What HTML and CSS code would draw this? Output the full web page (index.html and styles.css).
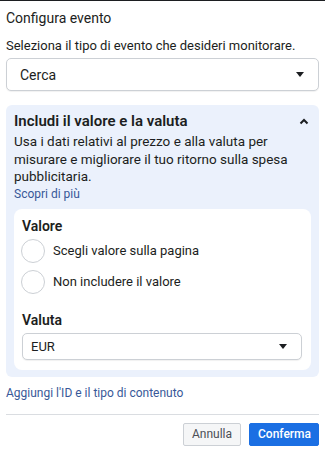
FILE: index.html
```html
<!DOCTYPE html>
<html lang="it">
<head>
<meta charset="utf-8">
<title>Configura evento</title>
<link rel="stylesheet" href="styles.css">
</head>
<body>
<div class="dialog">
  <h1 class="title">Configura evento</h1>
  <p class="subtitle">Seleziona il tipo di evento che desideri monitorare.</p>
  <div class="select select-main">
    <span>Cerca</span>
    <span class="caret"></span>
  </div>

  <section class="panel">
    <div class="panel-head">
      <h2>Includi il valore e la valuta</h2>
      <svg class="chev" width="10" height="7" viewBox="0 0 10 7"><path d="M1.5 5.5 L5 2 L8.5 5.5" fill="none" stroke="#1c1e21" stroke-width="2"/></svg>
    </div>
    <p class="desc">Usa i dati relativi al prezzo e alla valuta per misurare e migliorare il tuo ritorno sulla spesa pubblicitaria.</p>
    <a class="link small" href="#">Scopri di più</a>

    <div class="card">
      <h3>Valore</h3>
      <label class="radio"><span class="circle"></span><span>Scegli valore sulla pagina</span></label>
      <label class="radio"><span class="circle"></span><span>Non includere il valore</span></label>
      <h3 class="valuta">Valuta</h3>
      <div class="select select-eur">
        <span>EUR</span>
        <span class="caret"></span>
      </div>
    </div>
  </section>

  <a class="link extra" href="#">Aggiungi l'ID e il tipo di contenuto</a>
  <hr class="sep">
  <div class="actions">
    <button class="btn cancel">Annulla</button>
    <button class="btn confirm">Conferma</button>
  </div>
</div>
</body>
</html>
```

FILE: styles.css
```css
html, body {
  margin: 0;
  padding: 0;
  background: #ffffff;
}
body {
  font-family: Roboto, "Liberation Sans", Arial, sans-serif;
  color: #1c1e21;
}
.dialog {
  width: 313px;
  padding: 0 6px;
  border-top: 1px solid #1c1e21;
}
.title {
  margin: 8px 0 0;
  font-size: 14px;
  line-height: 18px;
  font-weight: 400;
}
.subtitle {
  margin: 10px 0 0;
  font-size: 13px;
  line-height: 17px;
}
.select {
  display: flex;
  align-items: center;
  justify-content: space-between;
  box-sizing: border-box;
  border: 1px solid #ccd0d5;
  border-radius: 5px;
  background: #fff;
  box-shadow: 0 1px 1px rgba(0,0,0,0.06);
}
.select-main {
  margin-top: 4px;
  height: 33px;
  padding: 0 14px 0 13px;
  font-size: 14px;
}
.caret {
  width: 0;
  height: 0;
  border-left: 4.5px solid transparent;
  border-right: 4.5px solid transparent;
  border-top: 5px solid #1c1e21;
}
.panel {
  margin-top: 14px;
  background: #ebf1fc;
  border-radius: 6px;
  padding: 7px 8px 7px 8px;
}
.panel-head {
  display: flex;
  align-items: center;
  justify-content: space-between;
  padding-right: 2px;
}
.panel-head h2 {
  margin: 0;
  font-size: 15px;
  line-height: 18px;
  font-weight: 600;
}
.desc {
  margin: 3px 0 0;
  font-size: 13.5px;
  line-height: 17.5px;
}
.link {
  color: #385898;
  text-decoration: none;
  display: block;
}
.small {
  font-size: 12px;
  line-height: 16px;
}
.card {
  margin-top: 7px;
  background: #fff;
  border-radius: 8px;
  padding: 8px 9px 10px 8px;
}
.card h3 {
  margin: 0;
  font-size: 14px;
  line-height: 18px;
  font-weight: 600;
}
.radio {
  display: flex;
  align-items: center;
  gap: 8px;
  font-size: 13px;
  height: 24px;
  margin-top: 4px;
}
.radio + .radio {
  margin-top: 7px;
}
.circle {
  box-sizing: border-box;
  width: 24px;
  height: 24px;
  border: 1px solid #ccd0d5;
  border-radius: 50%;
  margin-left: -1px;
}
.card .valuta {
  margin-top: 17px;
}
.select-eur {
  margin-top: 4px;
  height: 27px;
  padding: 0 14px 0 8px;
  font-size: 13px;
}
.extra {
  margin-top: 8px;
  font-size: 12px;
  line-height: 16px;
}
.sep {
  margin: 13px 0 0;
  border: 0;
  border-top: 1px solid #dadde1;
}
.actions {
  display: flex;
  justify-content: flex-end;
  gap: 8px;
  margin-top: 8px;
}
.btn {
  font-family: Roboto, "Liberation Sans", Arial, sans-serif;
  font-size: 12px;
  height: 23px;
  padding: 0 8px;
  border-radius: 2px;
  cursor: pointer;
}
.cancel {
  background: #f5f6f7;
  border: 1px solid #ccd0d5;
  color: #4b4f56;
  width: 58px;
}
.confirm {
  background: #1b6fe3;
  border: 1px solid #1b6fe3;
  color: #fff;
  font-weight: 500;
  width: 70px;
}
```
